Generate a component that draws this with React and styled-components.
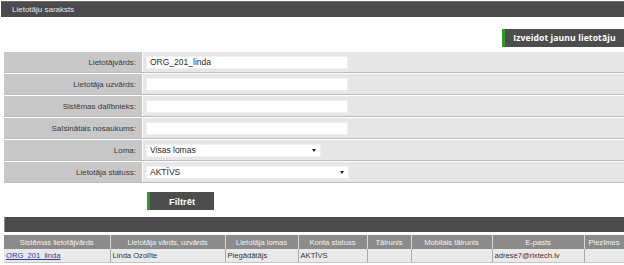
import React from 'react';
import styled, { createGlobalStyle } from 'styled-components';

const GlobalStyle = createGlobalStyle`
  html, body {
    margin: 0;
    padding: 0;
    background: #ffffff;
    font-family: "Liberation Sans", Arial, sans-serif;
  }
`;

const Page = styled.div`
  width: 624px;
  height: 265px;
  overflow: hidden;
  display: flex;
  flex-direction: column;
`;

const TitleBar = styled.div`
  margin: 1px 0 0 1px;
  height: 16px;
  background: #4b4b4b;
  border-top: 1px solid #6a6a6a;
  box-sizing: border-box;
  display: flex;
  align-items: center;
  padding-left: 11px;
  color: #e8e8e8;
  font-size: 8px;
`;

const Toolbar = styled.div`
  display: flex;
  justify-content: flex-end;
  margin-top: 12px;
`;

const DarkButton = styled.button`
  height: 18px;
  width: ${(p) => p.width}px;
  border: 0;
  border-left: 3px solid #2f9a2a;
  background: #4d4d4d;
  color: #ffffff;
  font-family: ${(p) => (p.open ? '"Open Sans", sans-serif' : '"Liberation Sans", Arial, sans-serif')};
  font-weight: bold;
  font-size: ${(p) => p.size}px;
  letter-spacing: ${(p) => (p.open ? '0.1px' : '0')};
  padding: 0;
  display: flex;
  align-items: center;
  justify-content: center;
  cursor: pointer;
`;

const Form = styled.div`
  margin: 5px 0 0 4px;
  display: flex;
  flex-direction: column;
  gap: 1px;
`;

const FormRow = styled.div`
  display: grid;
  grid-template-columns: 139px 1fr;
  height: 21px;
  box-sizing: border-box;
  border-bottom: 1px solid #bcbcbc;
`;

const Label = styled.div`
  background: #c7c7c7;
  border-right: 1px solid #ffffff;
  display: flex;
  align-items: center;
  justify-content: flex-end;
  padding-right: 6px;
  color: #3a3a3a;
  font-size: 8px;
`;

const Field = styled.div`
  background: #e6e6e6;
  display: flex;
  align-items: center;
  padding-left: 3px;
`;

const TextInput = styled.input`
  width: 202px;
  height: 13px;
  box-sizing: border-box;
  border: 1px solid #f0f0f0;
  background: #ffffff;
  font-family: "Liberation Sans", Arial, sans-serif;
  font-size: 8.5px;
  color: #2a2a2a;
  padding: 0 0 0 3px;
  outline: none;
`;

const SelectBox = styled.div`
  width: ${(p) => p.width}px;
  height: 13px;
  box-sizing: border-box;
  background: #ffffff;
  border: 1px solid #f0f0f0;
  display: flex;
  align-items: center;
  justify-content: space-between;
  padding: 0 4px 0 3px;
  font-size: 8.5px;
  color: #2a2a2a;
`;

const Caret = styled.span`
  width: 0;
  height: 0;
  border-left: 2.5px solid transparent;
  border-right: 2.5px solid transparent;
  border-top: 3px solid #222222;
`;

const FilterWrap = styled.div`
  margin: 9px 0 0 147px;
`;

const SectionBar = styled.div`
  margin: 7px 0 0 4px;
  height: 15px;
  background: #4b4b4b;
  border-left: 1px solid #8a8a8a;
`;

const Table = styled.table`
  margin: 3px 0 0 4px;
  width: 620px;
  border-collapse: collapse;
  table-layout: fixed;
  font-size: 7.6px;
`;

const HeadCell = styled.th`
  height: 14px;
  padding: 0;
  background: #8b8b8b;
  color: #f4f4f4;
  font-weight: normal;
  text-align: center;
  border-right: 1px solid #d8d8d8;
  white-space: nowrap;
  overflow: hidden;
`;

const Cell = styled.td`
  height: 13px;
  padding: 0 0 0 2px;
  background: #e9e9e9;
  color: #333333;
  border-right: 1px solid #a9a9a9;
  border-bottom: 1px solid #c4c4c4;
  white-space: nowrap;
  overflow: hidden;
`;

const UserLink = styled.a`
  color: #1d3fa6;
  text-decoration: underline;
`;

const fields = [
  { label: 'Lietotājvārds:', value: 'ORG_201_linda' },
  { label: 'Lietotāja uzvārds:', value: '' },
  { label: 'Sistēmas dalībnieks:', value: '' },
  { label: 'Saīsinātais nosaukums:', value: '' },
];

const columns = [
  ['Sistēmas lietotājvārds', 106],
  ['Lietotāja vārds, uzvārds', 115],
  ['Lietotāja lomas', 73],
  ['Konta statuss', 69],
  ['Tālrunis', 44],
  ['Mobilais tālrunis', 81],
  ['E-pasts', 92],
  ['Piezīmes', 40],
];

export default function App() {
  return (
    <Page>
      <GlobalStyle />
      <TitleBar>Lietotāju saraksts</TitleBar>
      <Toolbar>
        <DarkButton width={122} size={8.6} open>Izveidot jaunu lietotāju</DarkButton>
      </Toolbar>
      <Form>
        {fields.map((f) => (
          <FormRow key={f.label}>
            <Label>{f.label}</Label>
            <Field>
              <TextInput defaultValue={f.value} />
            </Field>
          </FormRow>
        ))}
        <FormRow>
          <Label>Loma:</Label>
          <Field>
            <SelectBox width={175}>
              <span>Visas lomas</span>
              <Caret />
            </SelectBox>
          </Field>
        </FormRow>
        <FormRow>
          <Label>Lietotāja statuss:</Label>
          <Field>
            <SelectBox width={203}>
              <span>AKTĪVS</span>
              <Caret />
            </SelectBox>
          </Field>
        </FormRow>
      </Form>
      <FilterWrap>
        <DarkButton width={67} size={9.4}>Filtrēt</DarkButton>
      </FilterWrap>
      <SectionBar />
      <Table>
        <colgroup>
          {columns.map(([name, w]) => (
            <col key={name} style={{ width: w }} />
          ))}
        </colgroup>
        <thead>
          <tr>
            {columns.map(([name]) => (
              <HeadCell key={name}>{name}</HeadCell>
            ))}
          </tr>
        </thead>
        <tbody>
          <tr>
            <Cell><UserLink href="#">ORG_201_linda</UserLink></Cell>
            <Cell>Linda Ozolīte</Cell>
            <Cell>Piegādātājs</Cell>
            <Cell>AKTĪVS</Cell>
            <Cell />
            <Cell />
            <Cell>adrese7@rixtech.lv</Cell>
            <Cell />
          </tr>
        </tbody>
      </Table>
    </Page>
  );
}
